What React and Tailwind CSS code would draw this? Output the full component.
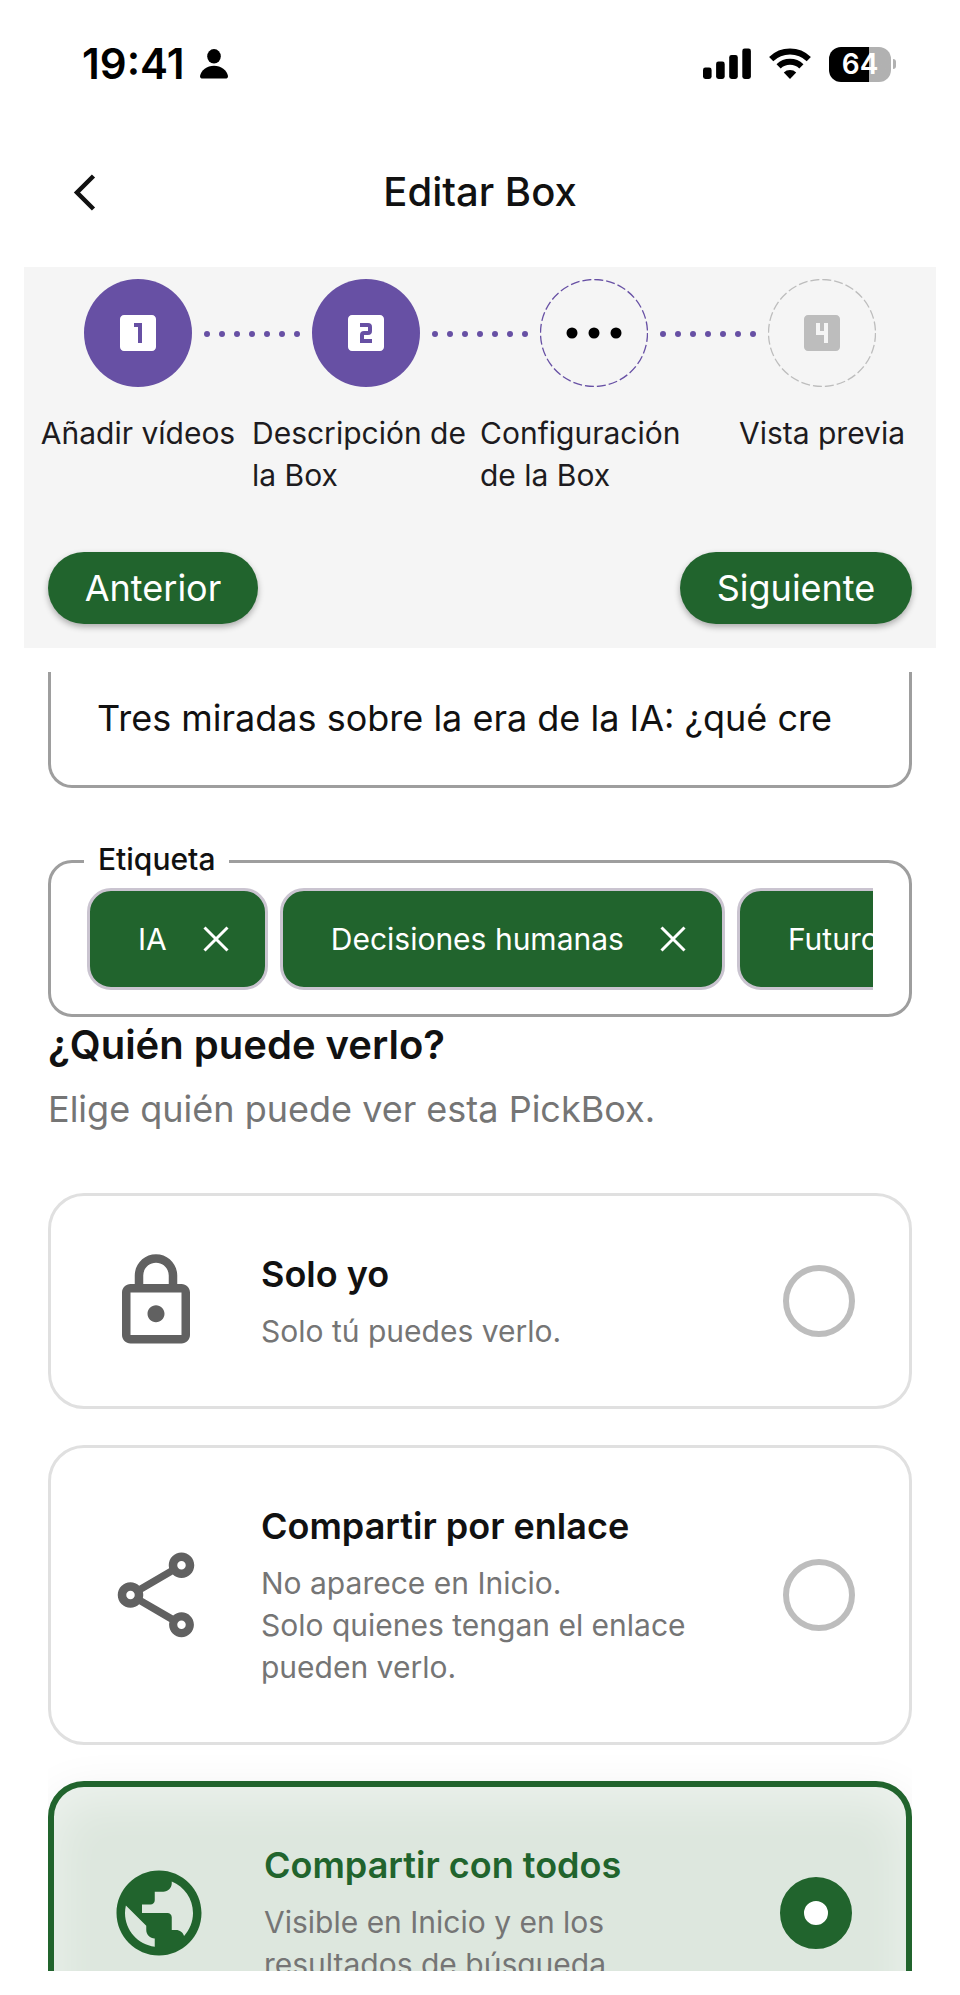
import React, { useState } from 'react';
import { MdLooksOne, MdLooksTwo, MdLooks4, MdOutlineLock, MdOutlineShare, MdPublic } from 'react-icons/md';

const steps = [
  { label: 'Añadir vídeos', status: 'done', icon: <MdLooksOne className="size-12" /> },
  { label: 'Descripción de\nla Box', status: 'done', icon: <MdLooksTwo className="size-12" /> },
  { label: 'Configuración\nde la Box', status: 'current', icon: <Dots /> },
  { label: 'Vista previa', status: 'pending', icon: <MdLooks4 className="size-12" /> },
];

const visibilityOptions = [
  { id: 'private', title: 'Solo yo', text: 'Solo tú puedes verlo.', Icon: MdOutlineLock },
  {
    id: 'link',
    title: 'Compartir por enlace',
    text: 'No aparece en Inicio.\nSolo quienes tengan el enlace\npueden verlo.',
    Icon: MdOutlineShare,
  },
  {
    id: 'public',
    title: 'Compartir con todos',
    text: 'Visible en Inicio y en los\nresultados de búsqueda.',
    Icon: MdPublic,
  },
];

function Dots() {
  return (
    <svg className="h-3 w-14" viewBox="0 0 56 12" fill="#000">
      <circle cx="6" cy="6" r="5.5" />
      <circle cx="28" cy="6" r="5.5" />
      <circle cx="50" cy="6" r="5.5" />
    </svg>
  );
}

function StatusBar() {
  return (
    <div className="flex h-32 shrink-0 items-center justify-between pr-16 pl-[82px] text-black">
      <div className="flex items-center gap-4">
        <span className="text-[42px] leading-none font-semibold">19:41</span>
        <svg className="h-[30px] w-7" viewBox="0 0 28 30" fill="currentColor">
          <ellipse cx="14" cy="7.3" rx="6.8" ry="7.3" />
          <path d="M0 27C1 21 7 16.7 14 16.7S27 21 28 27C28 29 27 29.6 25.5 29.6H2.5C1 29.6 0 29 0 27Z" />
        </svg>
      </div>
      <div className="flex items-center">
        <svg className="h-8 w-12" viewBox="0 0 48 32" fill="currentColor">
          <rect x="0" y="19.5" width="8.6" height="11.5" rx="2.4" />
          <rect x="13.1" y="13.5" width="8.6" height="17.5" rx="2.4" />
          <rect x="26.2" y="7" width="8.6" height="24" rx="2.4" />
          <rect x="39.3" y="0.5" width="8.6" height="30.5" rx="2.4" />
        </svg>
        <svg className="ml-[18px] h-8 w-[42px]" viewBox="0 0 42 32" fill="none" stroke="currentColor">
          <path d="M2.2 11.2A27 27 0 0 1 39.8 11.2" strokeWidth="6" />
          <path d="M9.6 18.4A16.5 16.5 0 0 1 32.4 18.4" strokeWidth="6" />
          <path d="M21 31L14.8 24.6A9 9 0 0 1 27.2 24.6Z" fill="currentColor" stroke="none" />
        </svg>
        <div className="ml-[18px] flex h-[35px] w-[62px] items-center justify-center rounded-[12px] bg-linear-to-r from-black from-64% to-[#b1b1b1] to-64% text-[28px] leading-none font-semibold text-white">
          64
        </div>
        <div className="ml-[2px] h-[10px] w-[3px] rounded-r-full bg-[#b1b1b1]" />
      </div>
    </div>
  );
}

function Header() {
  return (
    <header className="grid h-32 shrink-0 grid-cols-[1fr_auto_1fr] items-center px-16">
      <button type="button" aria-label="Atrás" className="flex size-12 items-center">
        <svg className="ml-2 h-10 w-6" viewBox="0 0 24 40" fill="none" stroke="#111" strokeWidth="4.5">
          <path d="M21.5 4L5 20.5L21.5 37" />
        </svg>
      </button>
      <h1 className="text-[40px] leading-12 font-medium">Editar Box</h1>
    </header>
  );
}

function StepCircle({ status, icon }) {
  if (status === 'done') {
    return (
      <div className="flex size-[108px] shrink-0 items-center justify-center rounded-full bg-[#6750a4] text-white">
        {icon}
      </div>
    );
  }
  const color = status === 'current' ? 'text-[#6750a4]' : 'text-[#bdbdbd]';
  return (
    <div className={`relative flex size-[108px] shrink-0 items-center justify-center ${color}`}>
      <svg className="absolute inset-0 size-full" viewBox="0 0 108 108" fill="none" stroke="currentColor">
        <circle cx="54" cy="54" r="53.5" strokeWidth="1.3" strokeDasharray="9 3" />
      </svg>
      {icon}
    </div>
  );
}

function Connector() {
  return (
    <div className="mx-3 flex flex-1 justify-between pt-[2px]">
      {[0, 1, 2, 3, 4, 5, 6].map((n) => (
        <span key={n} className="size-[6px] rounded-full bg-[#6750a4]" />
      ))}
    </div>
  );
}

function Stepper() {
  return (
    <div className="mx-6 mt-[11px] shrink-0 bg-[#f5f5f5] pt-3 pb-6">
      <div className="flex items-center px-[60px]">
        {steps.map((step, i) => (
          <React.Fragment key={step.label}>
            {i > 0 && <Connector />}
            <StepCircle status={step.status} icon={step.icon} />
          </React.Fragment>
        ))}
      </div>
      <div className="mt-[25px] grid grid-cols-4 text-[30px] leading-[42px] text-[#1d1b20]">
        {steps.map((step) => (
          <p
            key={step.label}
            className={step.label.includes('\n') ? 'whitespace-pre' : 'text-center whitespace-pre'}
          >
            {step.label}
          </p>
        ))}
      </div>
      <div className="mt-14 flex justify-between px-6 text-[36px] leading-12 text-white">
        <button type="button" className="h-[72px] min-w-[210px] rounded-full bg-[#21642d] px-8 shadow-[0_3px_6px_rgba(0,0,0,0.3)]">
          Anterior
        </button>
        <button type="button" className="h-[72px] min-w-[232px] rounded-full bg-[#21642d] px-8 shadow-[0_3px_6px_rgba(0,0,0,0.3)]">
          Siguiente
        </button>
      </div>
    </div>
  );
}

function Chip({ children }) {
  return (
    <span className="flex h-[102px] shrink-0 items-center rounded-[24px] border-3 border-[#cac4d0] bg-[#21642d] pr-9 pl-12 text-[30px] text-white">
      {children}
      <button type="button" aria-label={`Quitar ${children}`} className="ml-9">
        <svg className="size-[26px]" viewBox="0 0 26 26" fill="none" stroke="currentColor" strokeWidth="3">
          <path d="M1.5 1.5L24.5 24.5M24.5 1.5L1.5 24.5" />
        </svg>
      </button>
    </span>
  );
}

function VisibilityCard({ option, checked, onChange }) {
  const { id, title, text, Icon } = option;
  return (
    <label
      className={`flex items-center rounded-[36px] p-[54px] ${
        checked
          ? 'border-6 border-[#21642d] bg-[#dde7de] shadow-[0_12px_48px_rgba(0,0,0,0.08),inset_0_12px_48px_rgba(255,255,255,0.5)]'
          : 'border-3 border-[#e0e0e0]'
      }`}
    >
      <Icon className={`size-[102px] shrink-0 ${checked ? 'text-[#21642d]' : 'text-[#616161]'}`} />
      <span className="ml-[54px] flex flex-1 flex-col gap-3">
        <span className={`text-[36px] leading-12 font-semibold ${checked ? 'text-[#21642d]' : ''}`}>{title}</span>
        <span className="text-[30px] leading-[42px] whitespace-pre-line text-[#757575]">{text}</span>
      </span>
      <input
        type="radio"
        name="visibility"
        value={id}
        checked={checked}
        onChange={onChange}
        className="size-[72px] shrink-0 appearance-none rounded-full border-6 border-[#bdbdbd] bg-white checked:border-24 checked:border-[#21642d]"
      />
    </label>
  );
}

const App = () => {
  const [description, setDescription] = useState('Tres miradas sobre la era de la IA: ¿qué cre');
  const [visibility, setVisibility] = useState('public');

  return (
    <div className="flex h-screen flex-col bg-white font-['Inter','Liberation_Sans',sans-serif] text-[#111]">
      <StatusBar />
      <Header />
      <Stepper />

      <main className="mx-12 my-6 min-h-0 flex-1 overflow-x-hidden overflow-y-auto [scrollbar-width:none]">
        <input
          type="text"
          aria-label="Descripción"
          value={description}
          onChange={(e) => setDescription(e.target.value)}
          className="block h-[116px] w-full rounded-b-[24px] border-3 border-t-0 border-[#9e9e9e] px-[46px] pb-[22px] text-[36px] outline-none"
        />

        <fieldset className="mt-[55px] min-w-0 rounded-[24px] border-3 border-[#9e9e9e] pr-9 pb-6 pl-9">
          <legend className="ml-[-3px] px-[14px] pb-1 text-[30px] leading-8 font-medium">Etiqueta</legend>
          <div className="mt-[9px] flex gap-3 overflow-hidden">
            <Chip>IA</Chip>
            <Chip>Decisiones humanas</Chip>
            <Chip>Futuro</Chip>
          </div>
        </fieldset>

        <h2 className="mt-1 text-[40px] leading-12 font-semibold">¿Quién puede verlo?</h2>
        <p className="mt-4 text-[36px] leading-12 text-[#757575]">Elige quién puede ver esta PickBox.</p>

        <div className="mt-[60px] flex flex-col gap-9">
          {visibilityOptions.map((option) => (
            <VisibilityCard
              key={option.id}
              option={option}
              checked={visibility === option.id}
              onChange={() => setVisibility(option.id)}
            />
          ))}
        </div>
      </main>
    </div>
  );
};

export default App;
